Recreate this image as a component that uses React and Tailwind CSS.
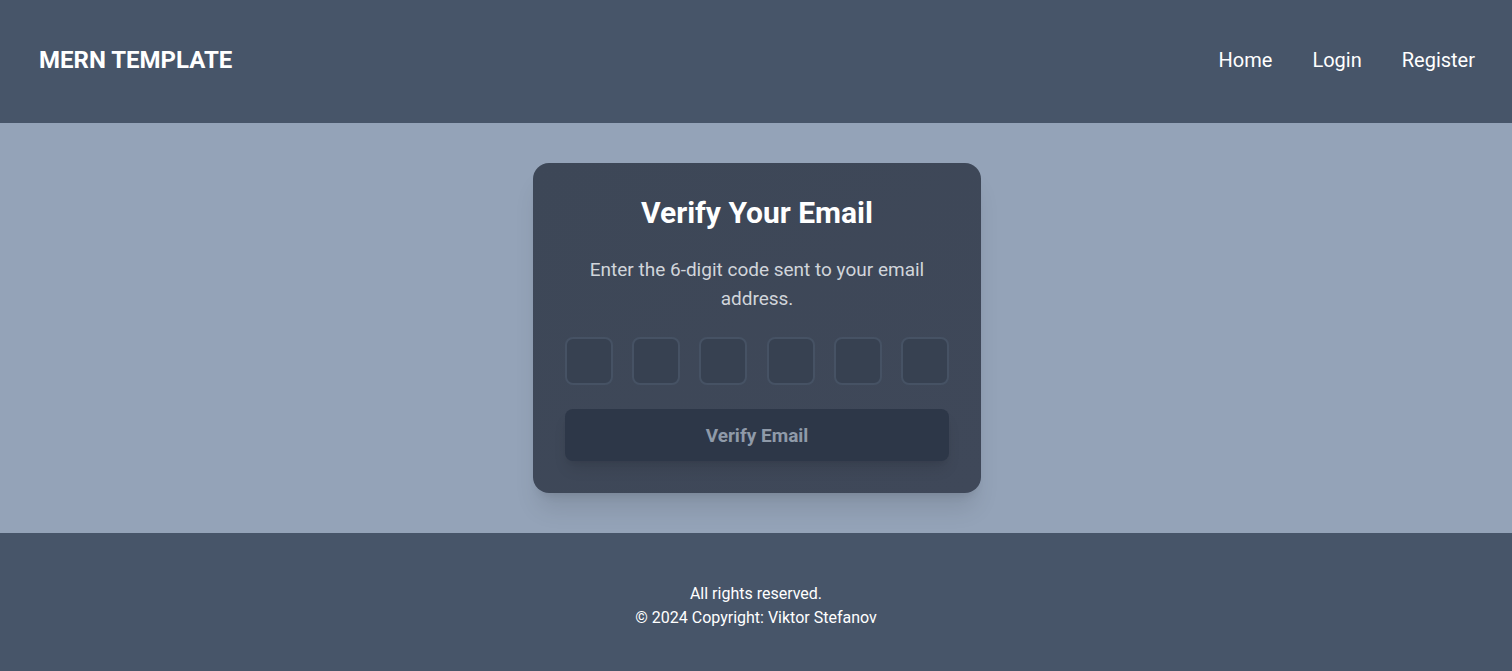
import { useState, useRef } from "react";

function App() {
  const [code, setCode] = useState(["", "", "", "", "", ""]);
  const inputsRef = useRef([]);

  const handleChange = (index, value) => {
    const next = [...code];
    next[index] = value.slice(-1);
    setCode(next);
    if (value && index < 5) inputsRef.current[index + 1]?.focus();
  };

  const filled = code.every((d) => d !== "");

  return (
    <div className="min-h-screen flex flex-col font-['Roboto',_'Liberation_Sans',_sans-serif]">
      {/* Header */}
      <header className="h-[123px] bg-[#475569] flex items-center justify-between pl-[39px] pr-[37px] pb-1">
        <a href="#" className="text-white text-2xl font-bold">
          MERN TEMPLATE
        </a>
        <nav className="flex items-center gap-10 text-white text-xl">
          <a href="#">Home</a>
          <a href="#">Login</a>
          <a href="#">Register</a>
        </nav>
      </header>

      {/* Main */}
      <main className="bg-[#94a3b8] flex justify-center py-10 pl-[2px]">
        <div className="w-[448px] bg-gradient-to-br from-[#3d4757] to-[#3f4859] rounded-2xl shadow-xl p-8">
          <h2 className="text-3xl font-bold text-white text-center mb-6">Verify Your Email</h2>
          <p className="text-[19px] text-[#d1d5db] text-center leading-[29px] mb-6">
            Enter the 6-digit code sent to your email address.
          </p>
          <div className="flex justify-between mb-6">
            {code.map((d, i) => (
              <input
                key={i}
                ref={(el) => (inputsRef.current[i] = el)}
                type="text"
                maxLength={1}
                value={d}
                onChange={(e) => handleChange(i, e.target.value)}
                className="w-12 h-12 rounded-lg bg-[#374151] border-2 border-[#465264] text-white text-2xl font-bold text-center outline-none focus:border-green-500"
              />
            ))}
          </div>
          <button
            disabled={!filled}
            className="w-full h-[52px] rounded-lg bg-[#2d3748] text-[#8f9aa9] text-[19px] font-bold shadow-lg pt-[2px]"
          >
            Verify Email
          </button>
        </div>
      </main>

      {/* Footer */}
      <footer className="bg-[#475569] text-white text-center pt-[49px] pb-12 flex-1">
        <p>All rights reserved.</p>
        <p>© 2024 Copyright: Viktor Stefanov</p>
      </footer>
    </div>
  );
}

export default App;
